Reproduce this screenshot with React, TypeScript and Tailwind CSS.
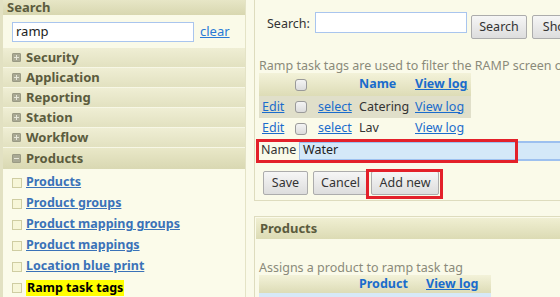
import React from "react";

const font = { fontFamily: '"Noto Sans", "Open Sans", sans-serif' };

const sections = ["Security", "Application", "Reporting", "Station", "Workflow"];
const productLinks = [
  "Products",
  "Product groups",
  "Product mapping groups",
  "Product mappings",
  "Location blue print",
];

const PlusBox: React.FC<{ minus?: boolean }> = ({ minus }) => (
  <span className=" inline-flex w-[9px] h-[9px] items-center justify-center bg-[#a9a994] border border-[#9a9a84] rounded-[1px] mr-[5px]">
    <span className=" relative w-[5px] h-[1px] bg-[#e6e6d8]">
      {!minus && (
        <span className=" absolute left-[2px] top-[-2px] w-[1px] h-[5px] bg-[#e6e6d8]" />
      )}
    </span>
  </span>
);

const Checkbox: React.FC = () => (
  <span className=" inline-block shrink-0 w-[12px] h-[12px] rounded-[3px] border border-[#9a9a9a] bg-gradient-to-b from-[#f4f4f4] to-[#dcdcdc]" />
);

const Btn: React.FC<{ label: string; w: string }> = ({ label, w }) => (
  <button
    className={` h-[24px] ${w} shrink-0 px-0 whitespace-nowrap border border-[#acacac] rounded-[2px] bg-gradient-to-b from-[#f6f6f6] to-[#dddddd] text-[12.5px] text-[#333] leading-none`}
  >
    {label}
  </button>
);

const Sidebar: React.FC = () => (
  <div className=" w-[245px] shrink-0 h-full bg-[#fbfbea] border-l-[3px] border-[#e2e1c2]">
    <div className=" h-[15px] bg-gradient-to-b from-[#e7e6c6] to-[#d8d7b0] flex items-center pl-[4px]">
      <span className=" text-[13px] font-bold text-[#5b5b3d] leading-[15px]">Search</span>
    </div>
    <div className=" h-[33px] bg-[#fafae8] flex items-center pl-[9px] gap-[6px]">
      <div className=" w-[182px] h-[20px] bg-white border border-[#a9c5ee] flex items-center pl-[3px] text-[13px] text-[#222]">
        ramp
      </div>
      <a className=" text-[13px] text-[#2a7ad6] underline">clear</a>
    </div>
    {sections.map((s) => (
      <div
        key={s}
        className=" h-[20px] flex items-center pl-[9px] bg-gradient-to-b from-[#efeed4] to-[#e2e1c0] border-b border-[#f7f7e6]"
      >
        <PlusBox />
        <span className=" text-[13px] font-bold text-[#5b5b3d] leading-none">{s}</span>
      </div>
    ))}
    <div className=" h-[21px] flex items-center pl-[9px] bg-gradient-to-b from-[#e9e8c8] to-[#d9d8b2]">
      <PlusBox minus />
      <span className=" text-[13px] font-bold text-[#5b5b3d] leading-none">Products</span>
    </div>
    <div className=" pt-[3px] pl-[9px] flex flex-col">
      {productLinks.map((p) => (
        <div key={p} className=" h-[21px] flex items-center">
          <span className=" w-[10px] h-[10px] border border-[#cfcda2] bg-[#f7f6d8] mr-[4px]" />
          <a className=" text-[12.5px] font-bold text-[#3a72b8] underline leading-none">{p}</a>
        </div>
      ))}
      <div className=" h-[21px] flex items-center">
        <span className=" w-[10px] h-[10px] border border-[#cfcda2] bg-[#f7f6d8] mr-[4px]" />
        <span className=" text-[12.5px] font-bold text-black bg-[#ffff00] px-[1px] leading-[16px]">
          Ramp task tags
        </span>
      </div>
    </div>
  </div>
);

const TagRow: React.FC<{ name: string; shaded?: boolean }> = ({ name, shaded }) => (
  <div className={` flex items-center ${shaded ? "h-[22px] bg-[#e0dfca]" : "h-[21px]"}`}>
    <a className=" text-[#1a6ccc] underline ml-[3px] w-[33px]">Edit</a>
    <Checkbox />
    <a className=" text-[#1a6ccc] underline ml-[11px] w-[41px]">select</a>
    <span className=" text-[#333] w-[56px] whitespace-nowrap">{name}</span>
    <a className=" text-[#1a6ccc] underline whitespace-nowrap">View log</a>
  </div>
);

const Main: React.FC = () => (
  <div className=" flex-1 h-full flex flex-col bg-[#fafae9] pl-[8px] border-l border-[#e4e3c6] text-[12.5px]">
    <div className=" relative h-[201px] shrink-0 border-l border-b border-[#dedcbe] pl-[4px] w-[400px]">
      <div className=" flex items-start mt-[12px] h-[24px]">
        <span className=" text-[#333] ml-[8px] w-[48px] mt-[3px]">Search:</span>
        <div className=" w-[152px] h-[21px] bg-white border border-[#a9c5ee]" />
        <div className=" ml-[4px] flex gap-[5px] mt-[3px]">
          <Btn label="Search" w="w-[56px]" />
          <Btn label="Show all" w="w-[70px]" />
        </div>
      </div>
      <p className=" mt-[23px] text-[#8a8a7a] whitespace-nowrap leading-[14px]">
        Ramp task tags are used to filter the RAMP screen on ramp devices
      </p>
      <div className=" w-[212px]">
        <div className=" h-[23px] flex items-center bg-gradient-to-b from-[#f3f2d9] to-[#dddcb6]">
          <span className=" w-[36px]" />
          <Checkbox />
          <span className=" w-[52px]" />
          <span className=" font-bold text-[#1a6ccc] w-[56px]">Name</span>
          <a className=" font-bold text-[#1a6ccc] underline whitespace-nowrap">View log</a>
        </div>
        <TagRow name="Catering" shaded />
        <TagRow name="Lav" />
      </div>
      <div className=" mt-[1px] h-[21px] flex items-center w-[320px]">
        <span className=" text-[#333] ml-[2px] w-[38px]">Name</span>
        <div className=" flex-1 h-[20px] bg-[#d4e8f8] border-y-2 border-l border-[#9dc0ef] flex items-center pl-[3px] text-[#222]">
          Water
        </div>
      </div>
      <div className=" mt-[10px] flex ml-[4px]">
        <Btn label="Save" w="w-[45px]" />
        <span className=" w-[5px] shrink-0" />
        <Btn label="Cancel" w="w-[55px]" />
        <span className=" w-[3px] shrink-0" />
        <Btn label="Add new" w="w-[68px]" />
      </div>
      <div className=" absolute left-[1px] top-[139px] w-[262px] h-[24px] border-[3px] border-[#e3202a] pointer-events-none" />
      <div className=" absolute left-[111px] top-[169px] w-[77px] h-[30px] border-[3px] border-[#e3202a] pointer-events-none" />
    </div>
    <div className=" mt-[15px] flex-1 border-l border-t border-[#dedcbe] pl-[1px] pt-[1px]">
      <div className=" h-[21px] flex items-center pl-[4px] bg-gradient-to-b from-[#f0efd2] to-[#dcdbb4]">
        <span className=" text-[13px] font-bold text-[#5b5b3d]">Products</span>
      </div>
      <p className=" mt-[22px] ml-[3px] text-[#8a8a7a] leading-[14px] whitespace-nowrap">
        Assigns a product to ramp task tag
      </p>
      <div className=" ml-[3px] w-[232px] h-[18px] flex items-center bg-gradient-to-b from-[#f3f2d9] to-[#dddcb6]">
        <span className=" w-[100px]" />
        <span className=" font-bold text-[#1a6ccc] w-[67px]">Product</span>
        <a className=" font-bold text-[#1a6ccc] underline whitespace-nowrap">View log</a>
      </div>
      <div className=" ml-[3px] w-[232px] h-[10px] bg-[#d7e9f7]" />
    </div>
  </div>
);

const App: React.FC = () => {
  return (
    <div className=" w-[560px] h-[297px] overflow-hidden flex bg-[#fafae9]" style={font}>
      <Sidebar />
      <Main />
    </div>
  );
};

export default App;
